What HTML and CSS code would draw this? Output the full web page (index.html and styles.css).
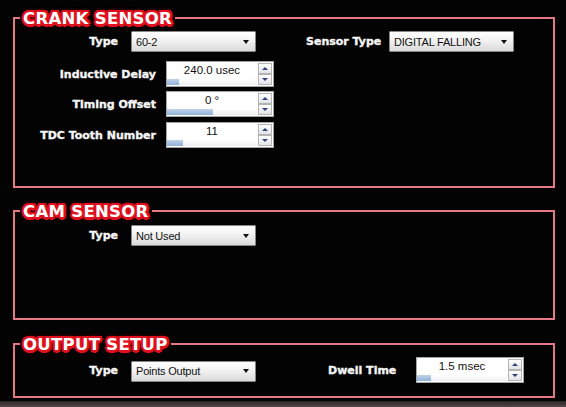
FILE: index.html
```html
<!DOCTYPE html>
<html>
<head>
<meta charset="utf-8">
<title>Ignition Setup</title>
<link rel="stylesheet" href="styles.css">
</head>
<body>
<div class="page">
  <section class="panel panel-crank">
    <h2 class="panel-title">CRANK SENSOR</h2>
    <div class="panel-body body-crank">
      <div class="row">
        <span class="lbl lbl-type">Type</span>
        <div class="select"><span class="select-text">60-2</span><i class="caret"></i></div>
        <span class="lbl lbl-sensor">Sensor Type</span>
        <div class="select"><span class="select-text">DIGITAL FALLING</span><i class="caret"></i></div>
      </div>
      <div class="row row-spin1">
        <span class="lbl lbl-wide">Inductive Delay</span>
        <div class="spin">
          <div class="spin-field"><span class="spin-value">240.0 usec</span><div class="spin-bar"><div class="spin-fill" style="width:12px"></div></div></div>
          <div class="spin-btns"><span class="spin-btn"><i class="arrow-up"></i></span><span class="spin-btn"><i class="arrow-down"></i></span></div>
        </div>
      </div>
      <div class="row row-spin2">
        <span class="lbl lbl-wide">Timing Offset</span>
        <div class="spin">
          <div class="spin-field"><span class="spin-value">0 °</span><div class="spin-bar"><div class="spin-fill" style="width:46px"></div></div></div>
          <div class="spin-btns"><span class="spin-btn"><i class="arrow-up"></i></span><span class="spin-btn"><i class="arrow-down"></i></span></div>
        </div>
      </div>
      <div class="row row-spin3">
        <span class="lbl lbl-wide">TDC Tooth Number</span>
        <div class="spin">
          <div class="spin-field"><span class="spin-value">11</span><div class="spin-bar"><div class="spin-fill" style="width:16px"></div></div></div>
          <div class="spin-btns"><span class="spin-btn"><i class="arrow-up"></i></span><span class="spin-btn"><i class="arrow-down"></i></span></div>
        </div>
      </div>
    </div>
  </section>

  <section class="panel panel-cam">
    <h2 class="panel-title">CAM SENSOR</h2>
    <div class="panel-body body-cam">
      <div class="row">
        <span class="lbl lbl-type">Type</span>
        <div class="select"><span class="select-text">Not Used</span><i class="caret"></i></div>
      </div>
    </div>
  </section>

  <section class="panel panel-output">
    <h2 class="panel-title">OUTPUT SETUP</h2>
    <div class="panel-body body-output">
      <div class="row">
        <span class="lbl lbl-type">Type</span>
        <div class="select select-output"><span class="select-text">Points Output</span><i class="caret"></i></div>
        <span class="lbl lbl-dwell">Dwell Time</span>
        <div class="spin">
          <div class="spin-field"><span class="spin-value">1.5 msec</span><div class="spin-bar"><div class="spin-fill" style="width:14px"></div></div></div>
          <div class="spin-btns"><span class="spin-btn"><i class="arrow-up"></i></span><span class="spin-btn"><i class="arrow-down"></i></span></div>
        </div>
      </div>
    </div>
  </section>
</div>
<div class="footer-strip"></div>
</body>
</html>
```
FILE: styles.css
```css
html, body {
  margin: 0;
  padding: 0;
}
body {
  width: 566px;
  height: 407px;
  overflow: hidden;
  background: #040303;
  display: flex;
  flex-direction: column;
  font-family: "DejaVu Sans", "Liberation Sans", sans-serif;
  color: #f4f4f4;
}
.page {
  padding: 17px 11px 0 13px;
}
.panel {
  box-sizing: border-box;
  border: 2px solid #e67884;
}
.panel-crank { height: 171px; margin-bottom: 22px; }
.panel-cam { height: 110px; margin-bottom: 23px; }
.panel-output { height: 55px; }

.panel-title {
  display: block;
  width: fit-content;
  margin: -10px 0 0 5px;
  padding: 0 3px;
  background: #040303;
  font-family: "DejaVu Sans", sans-serif;
  font-weight: bold;
  font-size: 16.5px;
  line-height: 20px;
  letter-spacing: 0.3px;
  color: #ffffff;
  text-shadow:
    2.5px 0 0 #e0101e, -2.5px 0 0 #e0101e, 0 2.5px 0 #e0101e, 0 -2.5px 0 #e0101e,
    1.8px 1.8px 0 #e0101e, -1.8px 1.8px 0 #e0101e, 1.8px -1.8px 0 #e0101e, -1.8px -1.8px 0 #e0101e,
    0 0 4px #d00818, 0 0 5px #900010;
}

.body-crank { padding-top: 2px; }
.body-cam { padding-top: 3px; }
.body-output { padding-top: 2px; }

.row {
  display: flex;
  align-items: center;
}
.row-spin1 { margin-top: 9px; }
.row-spin2 { margin-top: 4px; }
.row-spin3 { margin-top: 5px; }

.lbl {
  font-weight: bold;
  font-size: 11px;
  text-align: right;
  white-space: nowrap;
  color: #f6f6f6;
  -webkit-text-stroke: 0.35px #f6f6f6;
}
.lbl-type { width: 103px; margin-right: 13px; }
.lbl-wide { width: 141px; margin-right: 10px; }
.lbl-sensor { width: 75px; margin: 0 8px 0 50px; }
.lbl-dwell { width: 68px; margin: 0 20px 0 72px; }

.select {
  box-sizing: border-box;
  width: 125px;
  height: 21px;
  display: flex;
  align-items: center;
  justify-content: space-between;
  padding: 0 6px 0 4px;
  border: 1px solid #868686;
  border-radius: 1px;
  background: linear-gradient(#ffffff 0%, #f2f2f2 45%, #dadada 100%);
  font-family: "Liberation Sans", Arial, sans-serif;
  font-size: 11px;
  letter-spacing: -0.2px;
  color: #111;
}
.select-output { margin-top: 2px; }
.caret {
  width: 0;
  height: 0;
  border-left: 3.5px solid transparent;
  border-right: 3.5px solid transparent;
  border-top: 4px solid #111;
}

.spin {
  box-sizing: border-box;
  width: 108px;
  height: 26px;
  display: flex;
  border: 1px solid #a4a4a4;
  background: #ffffff;
}
.spin-field {
  width: 90px;
  display: flex;
  flex-direction: column;
  align-items: center;
}
.spin-value {
  font-family: "Liberation Sans", Arial, sans-serif;
  font-size: 11.5px;
  line-height: 14px;
  padding-top: 1px;
  color: #111;
}
.spin-bar {
  align-self: stretch;
  margin-top: auto;
  margin-bottom: 1px;
  height: 6px;
  background: linear-gradient(#ffffff, #eceef2);
}
.spin-fill {
  height: 100%;
  background: linear-gradient(#c0d3ea, #8fb0d6);
}
.spin-btns {
  display: flex;
  flex-direction: column;
  margin: 1px 1px 0 1px;
}
.spin-btn {
  box-sizing: border-box;
  width: 14px;
  height: 11px;
  border: 1px solid #b4b4b4;
  background: linear-gradient(#ffffff, #e2e4e8);
  display: flex;
  align-items: center;
  justify-content: center;
}
.arrow-up, .arrow-down {
  width: 0;
  height: 0;
  border-left: 3px solid transparent;
  border-right: 3px solid transparent;
}
.arrow-up { border-bottom: 3px solid #33407a; }
.arrow-down { border-top: 3px solid #33407a; }

.footer-strip {
  margin-top: auto;
  height: 6px;
  background: linear-gradient(#2c2727, #524949);
}
```
